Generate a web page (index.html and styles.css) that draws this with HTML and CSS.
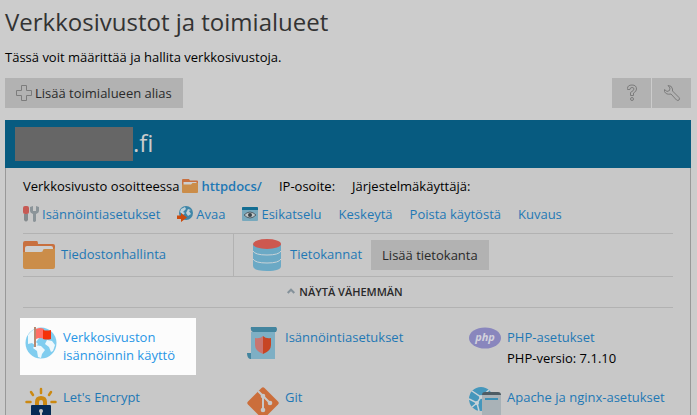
FILE: index.html
```html
<!DOCTYPE html>
<html lang="fi">
<head>
    <meta charset="UTF-8">
    <meta name="viewport" content="width=device-width, initial-scale=1.0">
    <title>Verkkosivustot ja toimialueet</title>
    <link rel="stylesheet" href="styles.css">
</head>
<body>
    <h1>Verkkosivustot ja toimialueet</h1>
    <p class="intro">Tässä voit määrittää ja hallita verkkosivustoja.</p>

    <!-- Toolbar -->
    <div class="toolbar">
        <button type="button" class="btn">
            <svg width="16" height="16" viewBox="0 0 16 16" fill="none" stroke="#7c7c7c"><path d="M5.500 .5h5v5h5v5h-5v5h-5v-5h-5v-5h5z"/></svg>
            Lisää toimialueen alias
        </button>
        <div class="tools">
            <button type="button" class="btn btn-icon" aria-label="Ohje">
                <svg width="16" height="18" viewBox="0 0 16 18" fill="none" stroke="#7c7c7c"><path d="M3.500 4.500Q3.500 1 8 1T12.500 5Q12.500 7.500 9.500 9V11.500H6.500V8.500Q10 6.500 10 5T8 3.500T6 5.500H3.500z"/><circle cx="8" cy="15" r="1.500"/></svg>
            </button>
            <button type="button" class="btn btn-icon" aria-label="Asetukset">
                <svg width="18" height="18" viewBox="0 0 18 18" fill="none" stroke="#7c7c7c"><path d="M5 1.500Q9 1.500 9.500 5V7L16 13.500Q17 15 16 16T13.500 16L8 10Q3 11 1.500 7.500V5.500L4 7.500L6.500 6.500L7 4z"/></svg>
            </button>
        </div>
    </div>

    <!-- Domain panel -->
    <div class="panel">
        <div class="panel-header">
            <span class="masked"></span>
            <h2>.fi</h2>
        </div>

        <div class="panel-body">
            <div class="info">
                <span class="info-item">Verkkosivusto osoitteessa
                    <a href="#" class="docroot">
                        <svg width="16" height="14" viewBox="0 0 32 28"><path fill="#c8703f" d="M0 2q0-2 2-2h12l2 3h14q2 0 2 2v10H0z"/><path fill="#cfcfcf" d="M3 6h26v9H3z"/><path fill="#cb8d49" d="M0 11h18l3-3h11v18q0 2-2 2H2q-2 0-2-2z"/></svg>
                        httpdocs/</a></span>
                <span>IP-osoite:</span>
                <span>Järjestelmäkäyttäjä:</span>
            </div>

            <div class="actions">
                <a href="#">
                    <svg width="16" height="16" viewBox="0 0 16 16"><rect width="6" height="8" rx="2" fill="#c65a54"/><path fill="#858b8e" d="M1 8h4v6q-2 3-4 0z"/><path fill="#8b9499" d="M7 1v4q0 2 3 3v7q1 2 3 0V8q3-1 3-3V1l-3-1v5h-3V0z"/></svg>
                    Isännöintiasetukset</a>
                <a href="#">
                    <svg width="16" height="16" viewBox="0 0 16 16"><circle cx="9" cy="7" r="7" fill="#3f86a8"/><path fill="#bdd0d8" d="M4 3l4-2 1 2-3 3 2 1-2 2-3-3zM11 3l3 1-2 1 2 3-3 2-2-3z"/><path fill="#cc4b0d" d="M0 9.500h4V7l6 4.500L4 16v-3H0z"/></svg>
                    Avaa</a>
                <a href="#">
                    <svg width="16" height="14" viewBox="0 0 16 14"><rect width="16" height="14" rx="1" fill="#78a9bd"/><path fill="#126d92" d="M0 3V1q0-1 1-1h14q1 0 1 1v2z"/><path fill="#c0c5c6" stroke="#536169" d="M2 8q6-6 12 0-6 6-12 0z"/><circle cx="8" cy="8" r="2" fill="#38444a"/></svg>
                    Esikatselu</a>
                <a href="#">Keskeytä</a>
                <a href="#">Poista käytöstä</a>
                <a href="#">Kuvaus</a>
            </div>

            <div class="shortcuts">
                <div class="shortcut files">
                    <svg width="32" height="28" viewBox="0 0 32 28"><path fill="#c8703f" d="M0 2q0-2 2-2h12q1 0 1 3h15q2 0 2 2v10H0z"/><path fill="#cfcfcf" d="M2 7q0-2 2-2h24q2 0 2 2v8H2z"/><path fill="#cb8d49" d="M0 11h18q2 0 2-2 0-1 2-1h8q2 0 2-2v20q0 2-2 2H2q-2 0-2-2z"/></svg>
                    <a href="#">Tiedostonhallinta</a>
                </div>
                <div class="shortcut databases">
                    <svg width="28" height="32" viewBox="0 0 28 32"><path fill="#6ba9c5" d="M0 5h28v22q0 5-14 5T0 27z"/><path fill="none" stroke="#c8d3d8" d="M0 12q2 4 14 4t14-4M0 20q2 4 14 4t14-4"/><ellipse cx="14" cy="5" rx="14" ry="5" fill="#cd5850"/></svg>
                    <a href="#">Tietokannat</a>
                    <button type="button" class="btn">Lisää tietokanta</button>
                </div>
            </div>

            <button type="button" class="toggle">
                <svg width="8" height="6" viewBox="0 0 8 6" fill="none" stroke="#84919a" stroke-width="2"><path d="M.7 5L4 1.700 7.300 5"/></svg>
                NÄYTÄ VÄHEMMÄN
            </button>
        </div>

        <!-- Service tiles -->
        <div class="tiles">
            <div class="tile highlighted">
                <svg width="32" height="32" viewBox="0 0 32 32"><circle cx="16" cy="16" r="15.500" fill="#80cdef"/><path fill="#eef8fc" d="M3 8Q7 2 14 1l3 3-5 4 3 2-4 5 2 2-2 2-4-3-4 1zM10 18l6 1 4 4-3 4-1 4-3-1-1-6-4-3zM22 13l5 1 3 4-2 6-2 1-2-5-4-3z"/><path fill="#ff6f67" d="M11 2q4-2 8 0v10q-4-2-8 0z"/><path fill="#f43109" d="M18 3q4 1 8 0v9q-4 1-8 0z"/><path fill="#b68970" d="M9 0h2v20H9z"/></svg>
                <div class="tile-text"><a href="#">Verkkosivuston isännöinnin käyttö</a></div>
            </div>
            <div class="tile">
                <svg width="32" height="32" viewBox="0 0 32 32"><path fill="#43859f" d="M4 0h25q2 2 0 5H6Q3 4 4 0zM0 26h7v6H3q-3-1-3-6z"/><path fill="#7eafc4" d="M4 5h24v27H4z"/><path fill="#c97570" d="M16 9q-3 3-8 2v7q0 6 8 9z"/><path fill="#c74524" d="M16 9q3 3 8 2v7q0 6-8 9z"/></svg>
                <div class="tile-text"><a href="#">Isännöintiasetukset</a></div>
            </div>
            <div class="tile">
                <svg width="32" height="22" viewBox="0 0 32 22"><ellipse cx="16" cy="11" rx="16" ry="10.500" fill="#8986bd"/><text class="php-logo" x="16" y="14" text-anchor="middle">php</text></svg>
                <div class="tile-text">
                    <a href="#">PHP-asetukset</a>
                    <p>PHP-versio: 7.1.10</p>
                </div>
            </div>
            <div class="tile">
                <svg width="32" height="38" viewBox="0 0 32 38"><path fill="none" stroke="#cb8912" stroke-width="2.500" stroke-linecap="round" d="M16 2v4M6 5l2 3M26 5l-2 3M1.500 15h4M30.500 15h-4"/><path fill="none" stroke="#cb8912" stroke-width="4" d="M12 19v-4q0-4 4-4t4 4v4"/><rect x="6" y="18" width="20" height="17" rx="1" fill="#052b56"/><circle cx="16" cy="24" r="2" fill="#c8c8c8"/><path fill="#c8c8c8" d="M15 24h2v6h-2z"/></svg>
                <div class="tile-text"><a href="#">Let's Encrypt</a></div>
            </div>
            <div class="tile">
                <svg width="32" height="32" viewBox="0 0 32 32"><path fill="#cb6e3b" d="M14.500 1q1.500-1.500 3 0L31 14.500q1.500 1.500 0 3L17.500 31q-1.500 1.500-3 0L1 17.500q-1.500-1.500 0-3z"/><path fill="none" stroke="#c8c8c8" stroke-width="2" d="M11 4l5 5v14M16 9l7 7"/><g fill="#c8c8c8"><circle cx="16" cy="9" r="2.300"/><circle cx="23" cy="16" r="2.300"/><circle cx="16" cy="23" r="2.300"/></g></svg>
                <div class="tile-text"><a href="#">Git</a></div>
            </div>
            <div class="tile">
                <svg width="32" height="32" viewBox="0 0 32 32"><circle cx="12" cy="12" r="12" fill="#4597bc"/><path fill="none" stroke="#c8d3d8" stroke-width="1.500" d="M3 4l9 6 8-7M12 10l-4 6-8-4M8 16l2 8M12 10l12 3M8 16l-5 4"/><circle cx="12" cy="10" r="2" fill="#c8d3d8"/><circle cx="8" cy="16" r="2" fill="#c8d3d8"/><path fill="#a9b2b7" d="M13 8h19v24H13z"/><path fill="#4e5c64" d="M13 8q0-3 3-3h13q3 0 3 3z"/><path fill="#3c8fb5" d="M16 11h13v2H16z"/></svg>
                <div class="tile-text"><a href="#">Apache ja nginx-asetukset</a></div>
            </div>
        </div>
    </div>
</body>
</html>
```
FILE: styles.css
```css
html {
    overflow: hidden;
}

body {
    margin: 0;
    padding: 6px 6px 0 5px;
    font-family: "Open Sans", sans-serif;
    font-size: 13px;
    line-height: 18px;
    color: #000;
    background-color: #ccc;
}

svg {
    flex: none;
}

a {
    color: #1f78b5;
    text-decoration: none;
}

h1 {
    margin: 0;
    font-size: 24px;
    line-height: 32px;
    font-weight: 400;
    color: #333;
}

.intro {
    margin: 10px 0 12px;
}

/* Buttons */
.btn {
    display: flex;
    align-items: center;
    gap: 3px;
    height: 30px;
    padding: 0 11px;
    border: none;
    background-color: #b2b2b2;
    color: #2a2a2a;
    font: inherit;
    white-space: nowrap;
    cursor: pointer;
}

.btn-icon {
    width: 39px;
    padding: 0;
    justify-content: center;
}

.toolbar {
    display: flex;
    justify-content: space-between;
    margin-bottom: 12px;
}

.tools {
    display: flex;
    gap: 1px;
}

/* Domain panel */
.panel {
    border: 1px solid #999;
    border-top: none;
    background-color: #c8c8c8;
}

.panel-header {
    display: flex;
    align-items: center;
    height: 48px;
    margin: 0 -1px;
    padding-left: 10px;
    background-color: #075b80;
}

    .panel-header h2 {
        margin: 0;
        padding-bottom: 2px;
        font-size: 24px;
        line-height: 32px;
        font-weight: 400;
        color: #ccc;
    }

.masked {
    width: 118px;
    height: 34px;
    background-color: #666;
}

.panel-body {
    padding: 9px 17px 0;
}

.info,
.actions {
    display: flex;
    gap: 17px;
    white-space: nowrap;
}

.info {
    margin-bottom: 10px;
}

.info-item,
.info-item a,
.actions a {
    display: flex;
    align-items: center;
    gap: 3px;
}

.docroot {
    font-weight: 600;
}

.shortcuts {
    display: flex;
    margin-top: 10px;
    border: 1px solid #b2b2b2;
    border-width: 1px 0;
}

.shortcut {
    display: flex;
    align-items: center;
    height: 42px;
}

    .shortcut a {
        padding-bottom: 2px;
    }

.files {
    gap: 6px;
    width: 210px;
    border-right: 1px solid #b2b2b2;
}

.databases {
    gap: 9px;
    padding-left: 19px;
}

.toggle {
    display: flex;
    align-items: center;
    justify-content: center;
    gap: 4px;
    width: 100%;
    height: 31px;
    padding: 0 6px 2px 0;
    border: none;
    border-bottom: 1px solid #b2b2b2;
    background: none;
    font: 600 11px "Open Sans", sans-serif;
    color: #2a2a2a;
    cursor: pointer;
}

/* Service tiles */
.tiles {
    display: grid;
    grid-template-columns: repeat(3, 1fr);
    align-items: start;
    padding: 10px 4px 10px 14px;
}

.tile {
    display: flex;
    align-items: flex-start;
    gap: 6px;
    padding: 9px 5px 11px;
}

.tile-text {
    padding-top: 1px;
}

    .tile-text p {
        margin: 3px 0 0;
    }

.highlighted {
    margin-right: 46px;
    background-color: #fcfcfc;
}

    .highlighted a {
        color: #2896e6;
    }

.php-logo {
    font: italic 700 11px "Open Sans", sans-serif;
    fill: #d2d1dc;
}
```
